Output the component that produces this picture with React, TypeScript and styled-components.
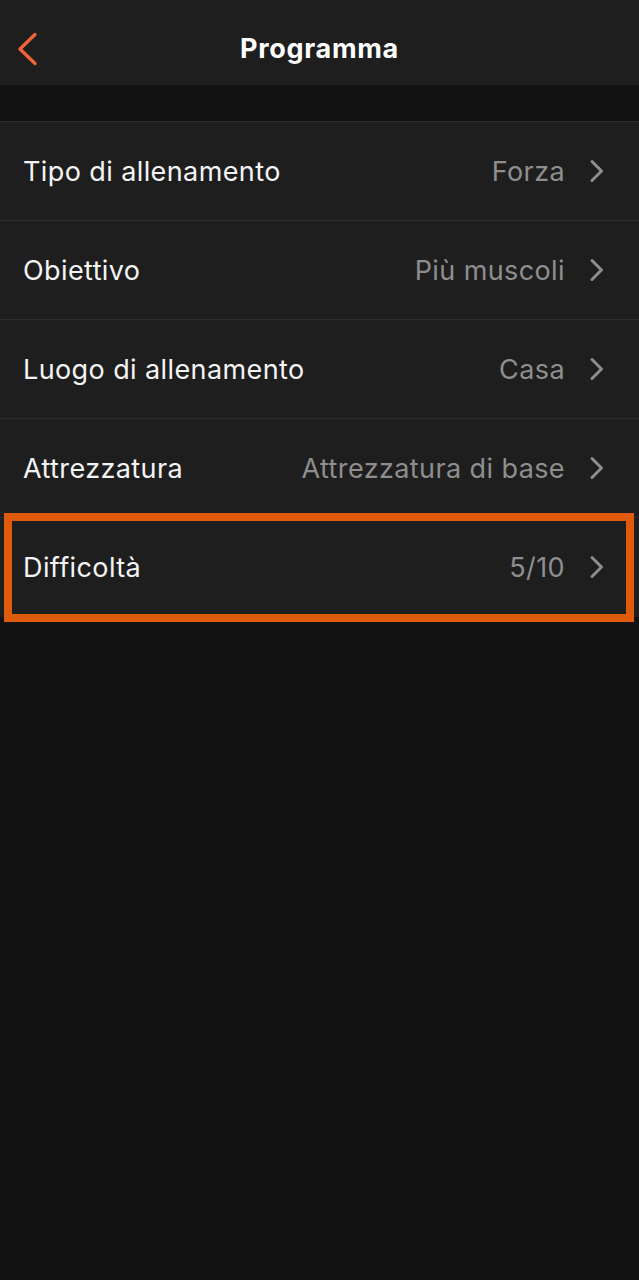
import React from "react";
import styled, { createGlobalStyle } from "styled-components";

const Global = createGlobalStyle`
  html, body { margin: 0; padding: 0; background: #121212; }
  body { font-family: Inter, "Noto Sans", sans-serif; -webkit-font-smoothing: antialiased; }
`;

const Page = styled.div`
  width: 639px;
  min-height: 1280px;
  background: #121212;
`;

const Header = styled.header`
  box-sizing: border-box;
  height: 85px;
  padding-top: 12px;
  background: #1e1e1e;
  display: grid;
  grid-template-columns: 80px 1fr 80px;
  align-items: center;
`;

const BackButton = styled.button`
  background: none;
  border: none;
  padding: 0 0 0 16px;
  height: 100%;
  display: flex;
  align-items: center;
  cursor: pointer;
`;

const Title = styled.h1`
  margin: 0;
  text-align: center;
  color: #ffffff;
  font-size: 27px;
  font-weight: 700;
  letter-spacing: 0.7px;
`;

const Spacer = styled.div`
  height: 36px;
`;

const List = styled.ul`
  list-style: none;
  margin: 0;
  padding: 0;
  background: #1e1e1e;
  border-top: 1px solid #2c2c2c;
`;

const Row = styled.li<{ $highlight?: boolean }>`
  position: relative;
  height: 98px;
  display: flex;
  align-items: center;
  padding: 0 34px 0 23px;
  border-bottom: 1px solid ${(p) => (p.$highlight ? "transparent" : "#2c2c2c")};
`;

const Highlight = styled.div`
  position: absolute;
  left: 4px;
  right: 5px;
  top: -5px;
  bottom: -6px;
  border: 8px solid #e05a0c;
  pointer-events: none;
`;

const Label = styled.span`
  flex: 1;
  color: #f4f4f4;
  font-size: 27px;
  font-weight: 400;
  letter-spacing: 0.4px;
`;

const Value = styled.span`
  color: #8e8e8e;
  font-size: 27px;
  font-weight: 400;
  letter-spacing: 0.4px;
  margin-right: 24px;
`;

const Chevron = () => (
  <svg width="16" height="24" viewBox="0 0 16 24" fill="none">
    <path d="M3 2.5 L12.5 12 L3 21.5" stroke="#8e8e8e" strokeWidth="3" strokeLinecap="round" strokeLinejoin="round" />
  </svg>
);

const BackIcon = () => (
  <svg width="22" height="34" viewBox="0 0 22 34" fill="none">
    <path d="M19 2.5 L4 17 L19 31.5" stroke="#f0623a" strokeWidth="3.4" strokeLinecap="round" strokeLinejoin="round" />
  </svg>
);

const items = [
  { label: "Tipo di allenamento", value: "Forza" },
  { label: "Obiettivo", value: "Più muscoli" },
  { label: "Luogo di allenamento", value: "Casa" },
  { label: "Attrezzatura", value: "Attrezzatura di base" },
  { label: "Difficoltà", value: "5/10", highlight: true },
];

export default function App() {
  return (
    <Page>
      <Global />
      <Header>
        <BackButton aria-label="Indietro">
          <BackIcon />
        </BackButton>
        <Title>Programma</Title>
        <div />
      </Header>
      <Spacer />
      <List>
        {items.map((it) => (
          <Row key={it.label} $highlight={it.highlight}>
            <Label>{it.label}</Label>
            <Value>{it.value}</Value>
            <Chevron />
            {it.highlight && <Highlight />}
          </Row>
        ))}
      </List>
    </Page>
  );
}
